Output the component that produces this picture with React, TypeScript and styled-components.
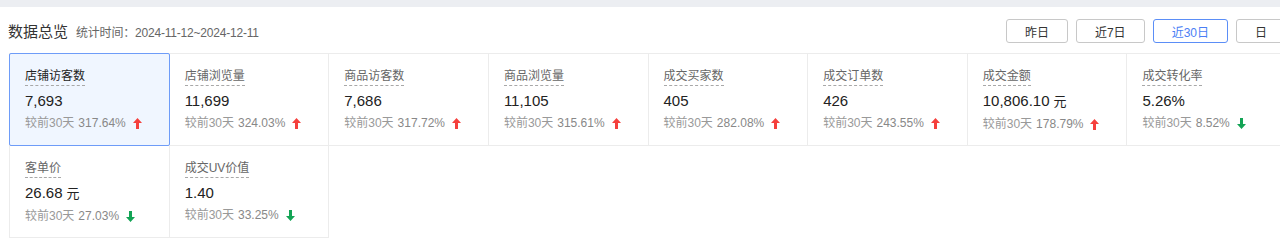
import React from "react";
import styled, { createGlobalStyle } from "styled-components";

const GlobalStyle = createGlobalStyle`
  body {
    margin: 0;
    background: #fff;
    overflow: hidden;
    font-family: "Liberation Sans", "Noto Sans CJK SC", sans-serif;
    color: #333;
  }
`;

const TopStrip = styled.div`
  height: 7px;
  background: #eceef2;
`;

const Page = styled.div`
  width: 1286px;
`;

const Header = styled.div`
  display: flex;
  align-items: center;
  height: 46px;
  padding-left: 8px;
`;

const Title = styled.span`
  font-size: 15px;
  color: #333;
  margin-right: 8px;
`;

const Period = styled.span`
  font-size: 12px;
  letter-spacing: -0.2px;
  color: #666;
  padding-top: 2px;
`;

const RangeGroup = styled.div`
  display: flex;
  gap: 8px;
  margin-left: auto;
  padding-top: 2px;
`;

const RangeButton = styled.button<{ $active?: boolean }>`
  height: 24px;
  padding: 0 18px;
  border: 1px solid ${(p) => (p.$active ? "#5b8ef7" : "#c8c8c8")};
  border-radius: 3px;
  background: #fff;
  color: ${(p) => (p.$active ? "#4a7ef5" : "#333")};
  font-family: inherit;
  font-size: 12px;
  white-space: nowrap;
`;

const Grid = styled.div`
  display: grid;
  grid-template-columns: repeat(8, 1fr);
  width: 1277px;
  margin-left: 9px;
  border-top: 1px solid #ececec;
  border-left: 1px solid #ececec;
`;

const Cell = styled.div<{ $active?: boolean }>`
  position: relative;
  display: flex;
  flex-direction: column;
  align-items: flex-start;
  height: 92px;
  box-sizing: border-box;
  padding: 14px 16px 0 15px;
  border-right: 1px solid #ececec;
  border-bottom: 1px solid #ececec;
  background: ${(p) => (p.$active ? "#f0f6ff" : "#fff")};

  &::after {
    content: "";
    display: ${(p) => (p.$active ? "block" : "none")};
    position: absolute;
    top: -1px;
    left: -1px;
    right: -1px;
    bottom: -1px;
    border: 1px solid #6e9cf8;
    border-radius: 2px;
    pointer-events: none;
  }
`;

const Label = styled.span<{ $active?: boolean }>`
  font-size: 12px;
  line-height: 17px;
  color: ${(p) => (p.$active ? "#222" : "#666")};
  border-bottom: 1px dashed #a8a8a8;
`;

const Value = styled.div`
  margin-top: 4px;
  font-size: 15px;
  line-height: 22px;
  color: #222;
`;

const Unit = styled.span`
  font-size: 13px;
  margin-left: 4px;
`;

const Compare = styled.div`
  display: flex;
  align-items: center;
  margin-top: 2px;
  font-size: 12px;
  line-height: 18px;
  color: #999;
  white-space: nowrap;
`;

const Rate = styled.span`
  margin-left: 4px;
  color: #888;
`;

const Arrow: React.FC<{ up: boolean }> = ({ up }) => (
  <svg
    width="9"
    height="11"
    viewBox="0 0 9 11"
    style={{ marginLeft: 7, transform: up ? "none" : "rotate(180deg)" }}
  >
    <path d="M4.5 0 L9 5 L6 5 L6 11 L3 11 L3 5 L0 5 Z" fill={up ? "#f5403d" : "#13a455"} />
  </svg>
);

type Metric = {
  label: string;
  value: string;
  unit?: string;
  rate: string;
  up: boolean;
};

const metrics: Metric[] = [
  { label: "店铺访客数", value: "7,693", rate: "317.64%", up: true },
  { label: "店铺浏览量", value: "11,699", rate: "324.03%", up: true },
  { label: "商品访客数", value: "7,686", rate: "317.72%", up: true },
  { label: "商品浏览量", value: "11,105", rate: "315.61%", up: true },
  { label: "成交买家数", value: "405", rate: "282.08%", up: true },
  { label: "成交订单数", value: "426", rate: "243.55%", up: true },
  { label: "成交金额", value: "10,806.10", unit: "元", rate: "178.79%", up: true },
  { label: "成交转化率", value: "5.26%", rate: "8.52%", up: false },
  { label: "客单价", value: "26.68", unit: "元", rate: "27.03%", up: false },
  { label: "成交UV价值", value: "1.40", rate: "33.25%", up: false },
];

const ranges = ["昨日", "近7日", "近30日", "日"];

export default function App() {
  return (
    <>
      <GlobalStyle />
      <TopStrip />
      <Page>
        <Header>
          <Title>数据总览</Title>
          <Period>统计时间：2024-11-12~2024-12-11</Period>
          <RangeGroup>
            {ranges.map((r) => (
              <RangeButton key={r} $active={r === "近30日"}>
                {r}
              </RangeButton>
            ))}
          </RangeGroup>
        </Header>
        <Grid>
          {metrics.map((m, i) => (
            <Cell key={m.label} $active={i === 0}>
              <Label $active={i === 0}>{m.label}</Label>
              <Value>
                {m.value}
                {m.unit && <Unit>{m.unit}</Unit>}
              </Value>
              <Compare>
                较前30天
                <Rate>{m.rate}</Rate>
                <Arrow up={m.up} />
              </Compare>
            </Cell>
          ))}
        </Grid>
      </Page>
    </>
  );
}
